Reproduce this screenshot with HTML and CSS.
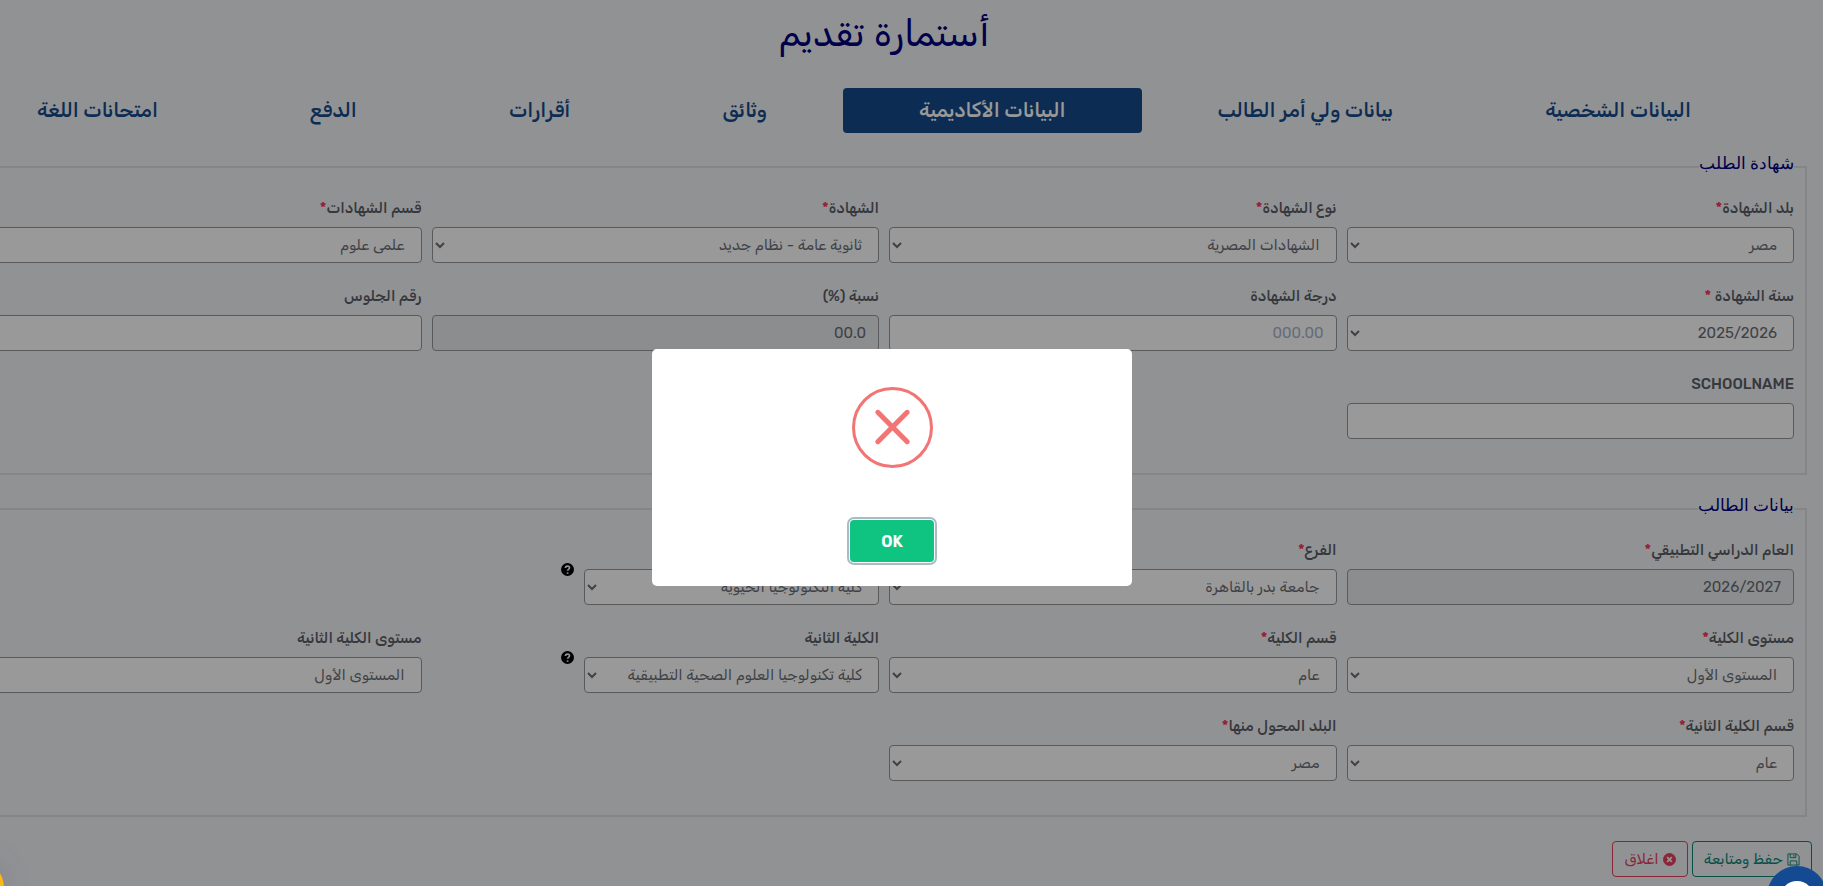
FILE: index.html
```
<!DOCTYPE html>
<html lang="ar" dir="rtl">
<head>
    <meta charset="UTF-8">
    <meta name="viewport" content="width=device-width, initial-scale=1.0">
    <title>أستمارة تقديم</title>
    <link rel="stylesheet" href="styles.css">
</head>
<body>
    <main class="page">
        <h1 class="page-title">أستمارة تقديم</h1>

        <nav class="tabs">
            <a class="tab" href="#personal">البيانات الشخصية</a>
            <a class="tab" href="#guardian">بيانات ولي أمر الطالب</a>
            <a class="tab active" href="#academic">البيانات الأكاديمية</a>
            <a class="tab" href="#documents">وثائق</a>
            <a class="tab" href="#declarations">أقرارات</a>
            <a class="tab" href="#payment">الدفع</a>
            <a class="tab" href="#language">امتحانات اللغة</a>
        </nav>

        <form>
            <fieldset class="box">
                <legend>شهادة الطلب</legend>
                <div class="grid">
                    <div class="field">
                        <label for="country">بلد الشهادة<span class="req">*</span></label>
                        <select id="country" class="control"><option>مصر</option></select>
                    </div>
                    <div class="field">
                        <label for="certType">نوع الشهادة<span class="req">*</span></label>
                        <select id="certType" class="control"><option>الشهادات المصرية</option></select>
                    </div>
                    <div class="field">
                        <label for="cert">الشهادة<span class="req">*</span></label>
                        <select id="cert" class="control"><option>ثانوية عامة - نظام جديد</option></select>
                    </div>
                    <div class="field">
                        <label for="certSection">قسم الشهادات<span class="req">*</span></label>
                        <select id="certSection" class="control"><option>علمى علوم</option></select>
                    </div>
                    <div class="field">
                        <label for="certYear">سنة الشهادة <span class="req">*</span></label>
                        <select id="certYear" class="control"><option>2025/2026</option></select>
                    </div>
                    <div class="field">
                        <label for="degree">درجة الشهادة</label>
                        <input id="degree" class="control" type="text" placeholder="000.00">
                    </div>
                    <div class="field">
                        <label for="percent">نسبة (%)</label>
                        <input id="percent" class="control" type="text" value="00.0" disabled>
                    </div>
                    <div class="field">
                        <label for="seat">رقم الجلوس</label>
                        <input id="seat" class="control" type="text">
                    </div>
                    <div class="field">
                        <label for="school">SCHOOLNAME</label>
                        <input id="school" class="control" type="text">
                    </div>
                </div>
            </fieldset>

            <fieldset class="box">
                <legend>بيانات الطالب</legend>
                <div class="grid">
                    <div class="field">
                        <label for="year">العام الدراسي التطبيقي<span class="req">*</span></label>
                        <input id="year" class="control" type="text" value="2026/2027" disabled>
                    </div>
                    <div class="field">
                        <label for="branch">الفرع<span class="req">*</span></label>
                        <select id="branch" class="control"><option>جامعة بدر بالقاهرة</option></select>
                    </div>
                    <div class="field">
                        <label for="faculty">الكلية<span class="req">*</span></label>
                        <div class="with-help">
                            <select id="faculty" class="control"><option>كلية التكنولوجيا الحيوية</option></select>
                            <svg class="help" viewBox="0 0 14 14"><circle cx="7" cy="7" r="7"/><path d="M4.8 5.4C4.8 2.6 9.2 2.7 9.2 5.2 9.2 6.8 7.1 6.8 7.1 8.4"/><path d="M7.1 10v1.6"/></svg>
                        </div>
                    </div>
                    <div class="field"></div>
                    <div class="field">
                        <label for="level">مستوى الكلية<span class="req">*</span></label>
                        <select id="level" class="control"><option>المستوى الأول</option></select>
                    </div>
                    <div class="field">
                        <label for="section">قسم الكلية<span class="req">*</span></label>
                        <select id="section" class="control"><option>عام</option></select>
                    </div>
                    <div class="field">
                        <label for="faculty2">الكلية الثانية</label>
                        <div class="with-help">
                            <select id="faculty2" class="control"><option>كلية تكنولوجيا العلوم الصحية التطبيقية</option></select>
                            <svg class="help" viewBox="0 0 14 14"><circle cx="7" cy="7" r="7"/><path d="M4.8 5.4C4.8 2.6 9.2 2.7 9.2 5.2 9.2 6.8 7.1 6.8 7.1 8.4"/><path d="M7.1 10v1.6"/></svg>
                        </div>
                    </div>
                    <div class="field">
                        <label for="level2">مستوى الكلية الثانية</label>
                        <select id="level2" class="control"><option>المستوى الأول</option></select>
                    </div>
                    <div class="field">
                        <label for="section2">قسم الكلية الثانية<span class="req">*</span></label>
                        <select id="section2" class="control"><option>عام</option></select>
                    </div>
                    <div class="field">
                        <label for="fromCountry">البلد المحول منها<span class="req">*</span></label>
                        <select id="fromCountry" class="control"><option>مصر</option></select>
                    </div>
                </div>
            </fieldset>

            <div class="actions">
                <button type="button" class="btn btn-save">
                    <svg viewBox="0 0 14 14"><path d="M1 1h9.5L13 3.500V13H1zM3.500 1v4h6V1M7.500 2v2M3.500 13V8.500h7V13"/></svg>
                    حفظ ومتابعة
                </button>
                <button type="button" class="btn btn-close">
                    <svg viewBox="0 0 14 14"><circle cx="7" cy="7" r="6.500"/><path d="M4.500 4.500l5 5M9.500 4.500l-5 5"/></svg>
                    اغلاق
                </button>
            </div>
        </form>
    </main>

    <div class="overlay">
        <div class="modal" role="alertdialog" aria-label="خطأ">
            <svg class="error-icon" viewBox="0 0 80 80">
                <circle cx="40" cy="40" r="38.500"/>
                <path d="M25.500 25l29 29M54.500 25l-29 29"/>
            </svg>
            <button type="button" class="btn-ok">OK</button>
        </div>
    </div>

    <!-- floating widgets, stay above the overlay -->
    <button type="button" class="chat" aria-label="محادثة">
        <svg viewBox="0 0 34 34"><circle cx="17" cy="17" r="17"/></svg>
    </button>
    <button type="button" class="bubble" aria-label="مساعدة"></button>
</body>
</html>
```
FILE: styles.css
```
* {
    box-sizing: border-box;
}
html {
    height: 100%;
    overflow: hidden;
}
body {
    margin: 0;
    height: 100%;
    overflow: hidden;
    background-color: #f2f4f7;
    color: #5b5e66;
    font-family: Rubik, Roboto, "Noto Sans Arabic", "Noto Sans", sans-serif;
    font-size: 15px;
    line-height: 24px;
}

/* the form runs a little past the left edge of the window */
.page {
    margin: 0 16px 0 -39px;
}
.page-title {
    margin: 0;
    padding: 3px 0 25px;
    color: #000080;
    font-size: 37px;
    font-weight: 400;
    line-height: 60px;
    text-align: center;
}

.tabs {
    display: flex;
    padding-right: 40px;
    margin-bottom: 17px;
}
.tab {
    flex: 1 1 auto;
    padding: 8px 16px;
    border-radius: 4px;
    color: #144a8a;
    font-size: 20px;
    font-weight: 500;
    line-height: 29px;
    text-align: center;
    text-decoration: none;
    white-space: nowrap;
}
.tab.active {
    background-color: #144a8a;
    color: #fff;
}


.box {
    margin: 0 0 17px;
    padding: 10px 11px 34px;
    min-width: 0;
    border: 2px solid #dcdee1;
}
.box legend {
    padding: 0 0 6px;
    color: #000080;
    font-family: "Liberation Serif", serif;
    font-size: 17px;
    line-height: 28px;
}
.grid {
    display: grid;
    grid-template-columns: repeat(4, minmax(0, 1fr));
    gap: 19px 10px;
}
.field {
    display: flex;
    flex-direction: column;
    gap: 5px;
    min-height: 69px;
}
.field label {
    font-weight: 500;
    line-height: 28px;
}
.req {
    color: #f5365c;
}
.control {
    width: 100%;
    height: 36px;
    padding: 0 12px;
    border: 1px solid #94969a;
    border-radius: 4px;
    background-color: #fff;
    color: #6a6d75;
    font-family: inherit;
    font-size: 15px;
}
.control:disabled {
    background-color: #e9ecef;
    opacity: 1;
}
.control::placeholder {
    color: #a9b4cc;
}
.with-help {
    display: flex;
    align-items: flex-start;
    gap: 10px;
}
.with-help .control {
    width: 66%;
}
.help {
    width: 13px;
    height: 13px;
    margin-top: -6px;
}
.help circle {
    fill: #000;
}
.help path {
    fill: none;
    stroke: #f2f4f7;
    stroke-width: 1.8;
}

.actions {
    display: flex;
    gap: 4px;
    margin-right: -5px;
    padding-top: 7px;
}
.btn {
    display: flex;
    align-items: center;
    gap: 4px;
    height: 36px;
    padding: 0 11px;
    border: 1px solid;
    border-radius: 4px;
    background-color: transparent;
    font-family: inherit;
    font-size: 15px;
}
.btn svg {
    width: 13px;
    height: 13px;
    fill: none;
    stroke: currentColor;
}
.btn-save {
    color: #0b8577;
}
.btn-close {
    color: #e8405c;
}
.btn-close circle {
    fill: currentColor;
}
.btn-close path {
    stroke: #f2f4f7;
    stroke-width: 2;
}


.overlay {
    position: fixed;
    inset: 0 0 -49px -39px;
    display: flex;
    align-items: center;
    justify-content: center;
    background-color: rgba(0, 0, 0, 0.4);
}
.modal {
    display: flex;
    flex-direction: column;
    align-items: center;
    gap: 52px;
    width: 480px;
    padding: 38px 20px 24px;
    border-radius: 5px;
    background-color: #fff;
}
.error-icon {
    width: 81px;
    height: 81px;
    fill: none;
    stroke: #f27474;
    stroke-width: 3;
}
.error-icon path {
    stroke-width: 5;
    stroke-linecap: round;
}
.btn-ok {
    width: 84px;
    height: 42px;
    border: 0;
    border-radius: 4px;
    background-color: #0fc480;
    box-shadow: 0 0 0 1px #fff, 0 0 0 3px #a9bcc6;
    color: #fff;
    font-family: inherit;
    font-size: 16px;
    font-weight: 600;
}

.chat {
    position: fixed;
    right: -4px;
    bottom: -40px;
    display: flex;
    justify-content: center;
    width: 60px;
    height: 60px;
    padding: 15px 0 0;
    border: 0;
    border-radius: 50%;
    background-color: #144a91;
}
.chat svg {
    flex: none;
    width: 34px;
    height: 34px;
    fill: #fff;
}
.bubble {
    position: fixed;
    left: -56px;
    bottom: -32px;
    width: 60px;
    height: 60px;
    border: 0;
    border-radius: 50%;
    background-color: #ffb912;
    box-shadow: 0 0 30px rgba(90, 90, 140, 0.2);
}
```
